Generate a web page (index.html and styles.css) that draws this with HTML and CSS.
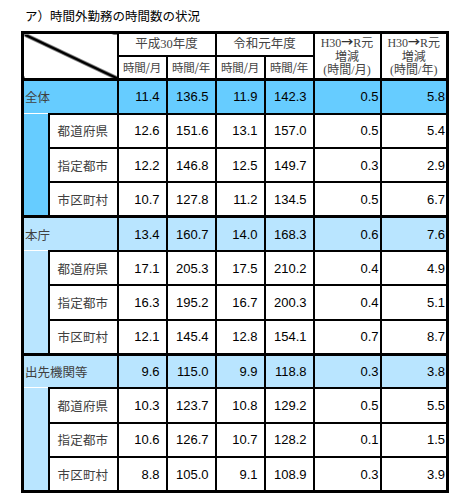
FILE: index.html
```html
<!DOCTYPE html>
<html lang="ja">
<head>
    <meta charset="UTF-8">
    <meta name="viewport" content="width=device-width, initial-scale=1.0">
    <title>時間外勤務の時間数の状況</title>
    <link rel="stylesheet" href="styles.css">
</head>
<body>
    <div class="title">ア）時間外勤務の時間数の状況</div>

    <table class="hours">
        <colgroup>
            <col class="c-strip">
            <col class="c-label">
            <col class="c-num">
            <col class="c-num">
            <col class="c-num">
            <col class="c-num">
            <col class="c-diff">
            <col class="c-diff">
        </colgroup>
        <thead>
            <tr class="head-top">
                <th class="corner" colspan="2" rowspan="2"></th>
                <th colspan="2">平成30年度</th>
                <th colspan="2">令和元年度</th>
                <th class="diff-head" rowspan="2">H30<span class="arrow">→</span>R元<br>増減<br>(時間/月)</th>
                <th class="diff-head" rowspan="2">H30<span class="arrow">→</span>R元<br>増減<br>(時間/年)</th>
            </tr>
            <tr class="head-sub">
                <th>時間/月</th>
                <th>時間/年</th>
                <th>時間/月</th>
                <th>時間/年</th>
            </tr>
        </thead>

        <!-- 全体 -->
        <tbody class="group all">
            <tr class="total">
                <th colspan="2">全体</th>
                <td>11.4</td><td>136.5</td><td>11.9</td><td>142.3</td><td class="diff">0.5</td><td class="diff">5.8</td>
            </tr>
            <tr class="sub">
                <td class="strip" rowspan="3"></td>
                <th>都道府県</th>
                <td>12.6</td><td>151.6</td><td>13.1</td><td>157.0</td><td class="diff">0.5</td><td class="diff">5.4</td>
            </tr>
            <tr class="sub">
                <th>指定都市</th>
                <td>12.2</td><td>146.8</td><td>12.5</td><td>149.7</td><td class="diff">0.3</td><td class="diff">2.9</td>
            </tr>
            <tr class="sub">
                <th>市区町村</th>
                <td>10.7</td><td>127.8</td><td>11.2</td><td>134.5</td><td class="diff">0.5</td><td class="diff">6.7</td>
            </tr>
        </tbody>

        <!-- 本庁 -->
        <tbody class="group">
            <tr class="total">
                <th colspan="2">本庁</th>
                <td>13.4</td><td>160.7</td><td>14.0</td><td>168.3</td><td class="diff">0.6</td><td class="diff">7.6</td>
            </tr>
            <tr class="sub">
                <td class="strip" rowspan="3"></td>
                <th>都道府県</th>
                <td>17.1</td><td>205.3</td><td>17.5</td><td>210.2</td><td class="diff">0.4</td><td class="diff">4.9</td>
            </tr>
            <tr class="sub">
                <th>指定都市</th>
                <td>16.3</td><td>195.2</td><td>16.7</td><td>200.3</td><td class="diff">0.4</td><td class="diff">5.1</td>
            </tr>
            <tr class="sub">
                <th>市区町村</th>
                <td>12.1</td><td>145.4</td><td>12.8</td><td>154.1</td><td class="diff">0.7</td><td class="diff">8.7</td>
            </tr>
        </tbody>

        <!-- 出先機関等 -->
        <tbody class="group">
            <tr class="total">
                <th colspan="2">出先機関等</th>
                <td>9.6</td><td>115.0</td><td>9.9</td><td>118.8</td><td class="diff">0.3</td><td class="diff">3.8</td>
            </tr>
            <tr class="sub">
                <td class="strip" rowspan="3"></td>
                <th>都道府県</th>
                <td>10.3</td><td>123.7</td><td>10.8</td><td>129.2</td><td class="diff">0.5</td><td class="diff">5.5</td>
            </tr>
            <tr class="sub">
                <th>指定都市</th>
                <td>10.6</td><td>126.7</td><td>10.7</td><td>128.2</td><td class="diff">0.1</td><td class="diff">1.5</td>
            </tr>
            <tr class="sub">
                <th>市区町村</th>
                <td>8.8</td><td>105.0</td><td>9.1</td><td>108.9</td><td class="diff">0.3</td><td class="diff">3.9</td>
            </tr>
        </tbody>
    </table>
</body>
</html>
```

FILE: styles.css
```css
* {
    margin: 0;
    padding: 0;
    box-sizing: border-box;
}

body {
    background-color: #fff;
    font-family: 'Noto Sans CJK JP', sans-serif;
    color: #000;
}

.title {
    padding: 8px 0 0 25px;
    height: 31px;
    font-size: 12.5px;
    line-height: 16px;
    color: #000;
}

.hours {
    margin-left: 21px;
    width: 426px;
    table-layout: fixed;
    border-collapse: collapse;
    border: 3px solid #000;
}

.c-strip { width: 26px; }
.c-label { width: 69px; }
.c-num { width: 49px; }
.c-diff { width: 67px; }

.hours th,
.hours td {
    border: 2px solid #000;
    font-weight: normal;
    white-space: nowrap;
    overflow: hidden;
}

/* header */
.hours thead th {
    font-family: 'Liberation Serif', 'Noto Sans CJK JP', serif;
    color: #444;
    text-align: center;
    vertical-align: middle;
}

.head-top {
    height: 23px;
}

.head-top th {
    font-size: 12.5px;
    line-height: 14px;
    border-bottom-width: 1px;
}

.head-sub {
    height: 24px;
}

.hours .head-sub th {
    font-family: 'Noto Sans CJK JP', sans-serif;
    font-size: 11.5px;
    letter-spacing: -0.2px;
    border-bottom-width: 3px;
}

.hours thead .diff-head {
    font-size: 12px;
    line-height: 13.5px;
    padding-top: 1px;
    border-bottom-width: 3px;
}

.arrow {
    font-family: 'Noto Sans CJK JP', sans-serif;
    font-weight: bold;
    color: #333;
}

.corner {
    background: linear-gradient(to top right, transparent calc(50% - 2px), #000 calc(50% - 1.2px), #000 calc(50% + 1.2px), transparent calc(50% + 2px));
    border-bottom-width: 3px !important;
}

/* body rows */
.total,
.sub {
    height: 34.33px;
}

.total > * {
    border-top-width: 3px !important;
}

.hours tbody th {
    font-size: 12.5px;
    color: #404040;
    text-align: left;
    vertical-align: middle;
}

.total th {
    padding-left: 1px;
}

.sub th {
    padding-left: 8px;
    letter-spacing: 0.2px;
}

.hours tbody td {
    font-family: 'Liberation Sans', Arial, sans-serif;
    font-size: 13px;
    text-align: right;
    vertical-align: middle;
    padding-right: 6px;
}

.hours tbody td.diff {
    padding-right: 1px;
}

.total {
    background-color: #b9e5ff;
}

.all .total,
.all .strip {
    background-color: #66ccff;
}

.strip {
    background-color: #b9e5ff;
    border-top-style: hidden !important;
}

.sub {
    background-color: #fff;
}
```
